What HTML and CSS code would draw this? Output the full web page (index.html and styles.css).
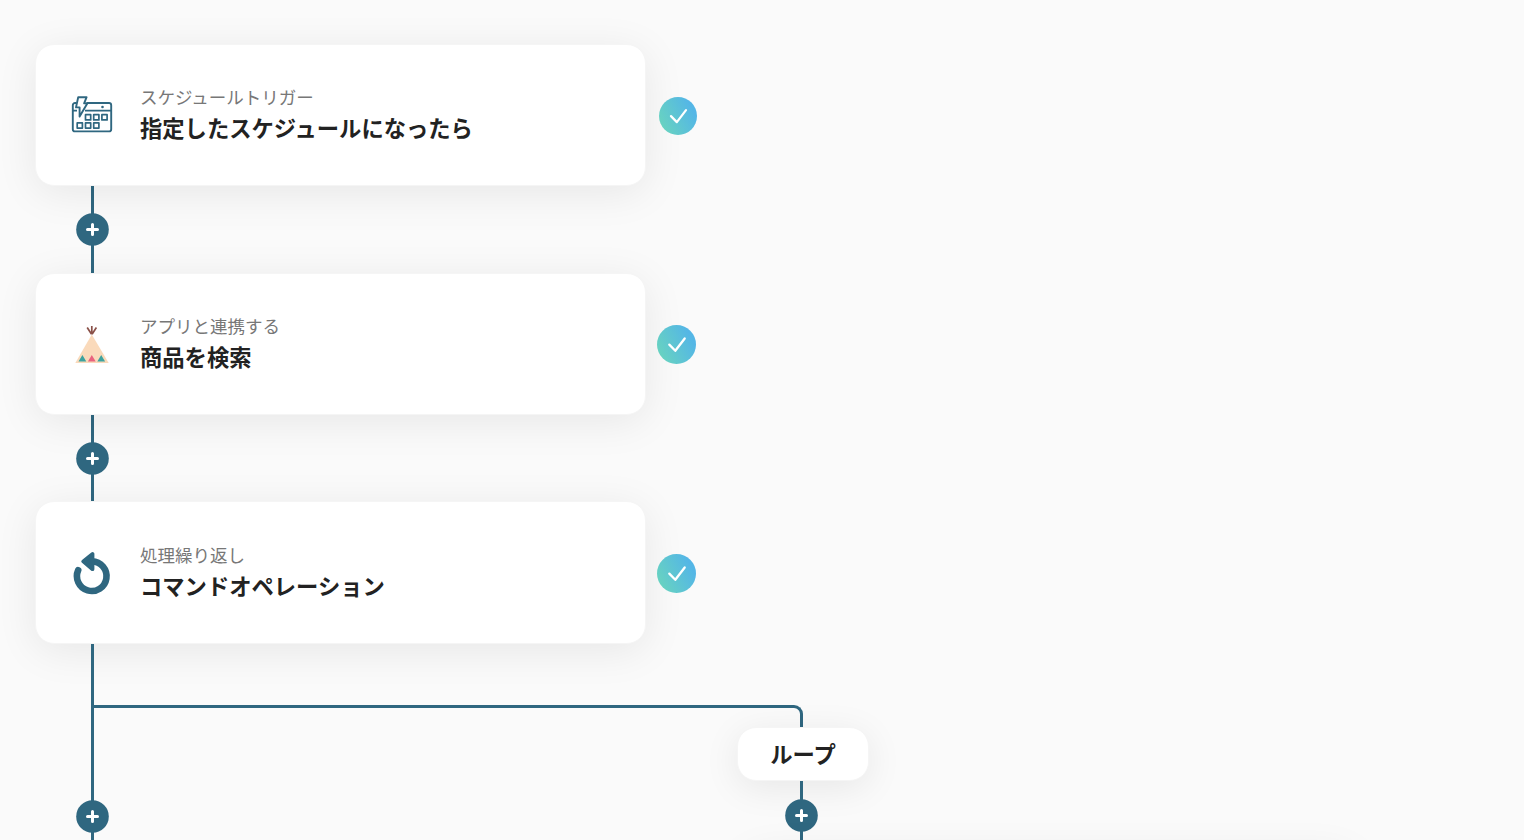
FILE: index.html
```html
<!DOCTYPE html>
<html lang="ja">
<head>
    <meta charset="UTF-8">
    <meta name="viewport" content="width=device-width, initial-scale=1.0">
    <title>フロー</title>
    <link rel="stylesheet" href="styles.css">
</head>
<body>

    <svg class="defs" width="0" height="0">
        <defs>
            <linearGradient id="check-fill" x1="0" y1="0.8" x2="1" y2="0.3">
                <stop offset="0.05" stop-color="#68d3c0"/>
                <stop offset="0.9" stop-color="#54b6e6"/>
            </linearGradient>
            <symbol id="check" viewBox="0 0 39 39">
                <circle cx="19.5" cy="19.5" r="19.5" fill="url(#check-fill)"/>
                <path d="M12.3 19.6l6 6.2 9.4-12.3" fill="none" stroke="#fff" stroke-width="2.3" stroke-linecap="round" stroke-linejoin="round"/>
            </symbol>
            <symbol id="plus" viewBox="0 0 33 33">
                <circle cx="16.5" cy="16.5" r="16.3" fill="#2f6780"/>
                <path d="M16.5 11.5v10M11.5 16.5h10" stroke="#fff" stroke-width="3" stroke-linecap="round"/>
            </symbol>
        </defs>
    </svg>

    <div class="flow">
        <div class="step">
            <div class="card">
                <svg class="icon" viewBox="0 0 42 42" fill="none" stroke="#2f6780" stroke-width="1.9" stroke-linejoin="round">
                    <path d="M5.500 9H4a2.200 2.200 0 0 0-2.200 2.200V35.200a2.200 2.200 0 0 0 2.200 2.200H38a2.200 2.200 0 0 0 2.200-2.200V11.200A2.200 2.200 0 0 0 38 9H15.500M2 16.600h4M14 16.600h26"/>
                    <path d="M7.200 3.200h8.400l-2.500 6.200h3.200L8.600 22.600V13.400H5z"/>
                    <circle cx="31.500" cy="13" r="1.300" fill="#2f6780" stroke="none"/>
                    <path stroke-width="1.700" d="M14.500 20.700h5.200v5.200h-5.200zM22.700 20.700h5.200v5.200h-5.200zM30.900 20.700h5.200v5.200h-5.200zM6.200 28.900h5.200v5.200H6.200zM14.500 28.900h5.200v5.200h-5.200zM22.700 28.900h5.200v5.200h-5.200z"/>
                </svg>
                <div class="text">
                    <div class="kind">スケジュールトリガー</div>
                    <div class="title">指定したスケジュールになったら</div>
                </div>
            </div>
            <svg class="check check-first"><use href="#check"/></svg>
        </div>

        <div class="connector"><svg class="plus"><use href="#plus"/></svg></div>

        <div class="step">
            <div class="card">
                <svg class="icon" viewBox="0 0 42 42">
                    <path d="M20.800 11.500V3M20.400 11L16.200 4.500M21.200 11l4.200-6.500" fill="none" stroke="#8a5149" stroke-width="1.700"/>
                    <path d="M20.800 11.500L37.700 40H4.300z" fill="#fadabb"/>
                    <path d="M11.400 32l3.900 6.500H7.500zM30.200 32l3.900 6.500h-7.800z" fill="#3da39f"/>
                    <path d="M20.800 32l3.900 6.500h-7.800z" fill="#e9637f"/>
                </svg>
                <div class="text">
                    <div class="kind">アプリと連携する</div>
                    <div class="title">商品を検索</div>
                </div>
            </div>
            <svg class="check"><use href="#check"/></svg>
        </div>

        <div class="connector connector-short"><svg class="plus"><use href="#plus"/></svg></div>

        <div class="step step-last">
            <div class="card">
                <svg class="icon icon-loop" viewBox="0 0 42 46" fill="none" stroke="#2f6780" stroke-linecap="round" stroke-linejoin="round">
                    <path d="M7.200 20.200A14.800 14.800 0 1 0 21 11.400" stroke-width="6.600"/>
                    <path d="M12.200 11.400L21.500 4v15.200z" fill="#2f6780" stroke-width="3.800"/>
                </svg>
                <div class="text">
                    <div class="kind">処理繰り返し</div>
                    <div class="title">コマンドオペレーション</div>
                </div>
            </div>
            <svg class="check check-last"><use href="#check"/></svg>
        </div>

        <div class="split">
            <div class="trunk"><svg class="plus"><use href="#plus"/></svg></div>
            <div class="branch">
                <div class="elbow"></div>
                <div class="steps">
                    <div class="label">ループ</div>
                    <div class="connector connector-branch"><svg class="plus"><use href="#plus"/></svg></div>
                    <div class="step"><div class="card"></div></div>
                </div>
            </div>
        </div>
    </div>

</body>
</html>
```

FILE: styles.css
```css
* {
    box-sizing: border-box;
}

body {
    margin: 0;
    background-color: #fafafa;
    color: #222;
    font-family: "Noto Sans CJK JP", sans-serif;
}

svg {
    display: block;
    flex: none;
}

.defs {
    position: absolute;
}

.flow {
    height: 100vh;
    overflow: hidden;
    padding: 44px 0 0 35px;
}

.step {
    display: flex;
    align-items: center;
    gap: 11px;
    height: 142px;
}

.step-last {
    height: 143px;
}

.card {
    display: flex;
    align-items: center;
    flex: none;
    width: 611px;
    height: 100%;
    padding-left: 35px;
    border: 1px solid #f5f5f5;
    border-radius: 19px;
    background-color: #fff;
    box-shadow: 0 7px 42px rgba(0, 0, 0, 0.08);
}

.icon {
    width: 42px;
    height: 42px;
}

.icon-loop {
    height: 46px;
}

.text {
    margin-left: 27px;
    padding-bottom: 4px;
}

.step-last .text {
    padding-bottom: 3px;
}

.kind {
    color: #777;
    font-size: 17.5px;
    line-height: 28px;
}

.title {
    font-size: 22.3px;
    font-weight: bold;
    line-height: 33px;
}

.check {
    width: 39px;
    height: 39px;
}

.check-first {
    width: 38px;
    height: 38px;
    margin: 2px 0 0 2px;
}

.check-last {
    margin-top: 2px;
}

.connector {
    display: flex;
    align-items: center;
    justify-content: center;
    width: 3px;
    height: 87px;
    margin-left: 56px;
    background-color: #2f6780;
}

.connector-short {
    height: 86px;
}

.connector-branch {
    height: 68px;
}

.plus {
    width: 33px;
    height: 33px;
}

.split {
    display: flex;
    padding-left: 56px;
}

.trunk {
    display: flex;
    justify-content: center;
    flex: none;
    width: 3px;
    padding-top: 156px;
    background-color: #2f6780;
}

.branch {
    flex: none;
    width: 1300px;
    padding-top: 61px;
}

.elbow {
    width: 709px;
    height: 22px;
    border: solid #2f6780;
    border-width: 3px 3px 0 0;
    border-top-right-radius: 9px;
}

.steps {
    margin-left: 650px;
}

.label {
    display: flex;
    align-items: center;
    justify-content: center;
    width: 132px;
    height: 54px;
    margin-left: -7px;
    padding-bottom: 2px;
    border: 1px solid #f5f5f5;
    border-radius: 19px;
    background-color: #fff;
    box-shadow: 0 7px 36px rgba(0, 0, 0, 0.08);
    font-size: 22.3px;
    font-weight: bold;
}
```
